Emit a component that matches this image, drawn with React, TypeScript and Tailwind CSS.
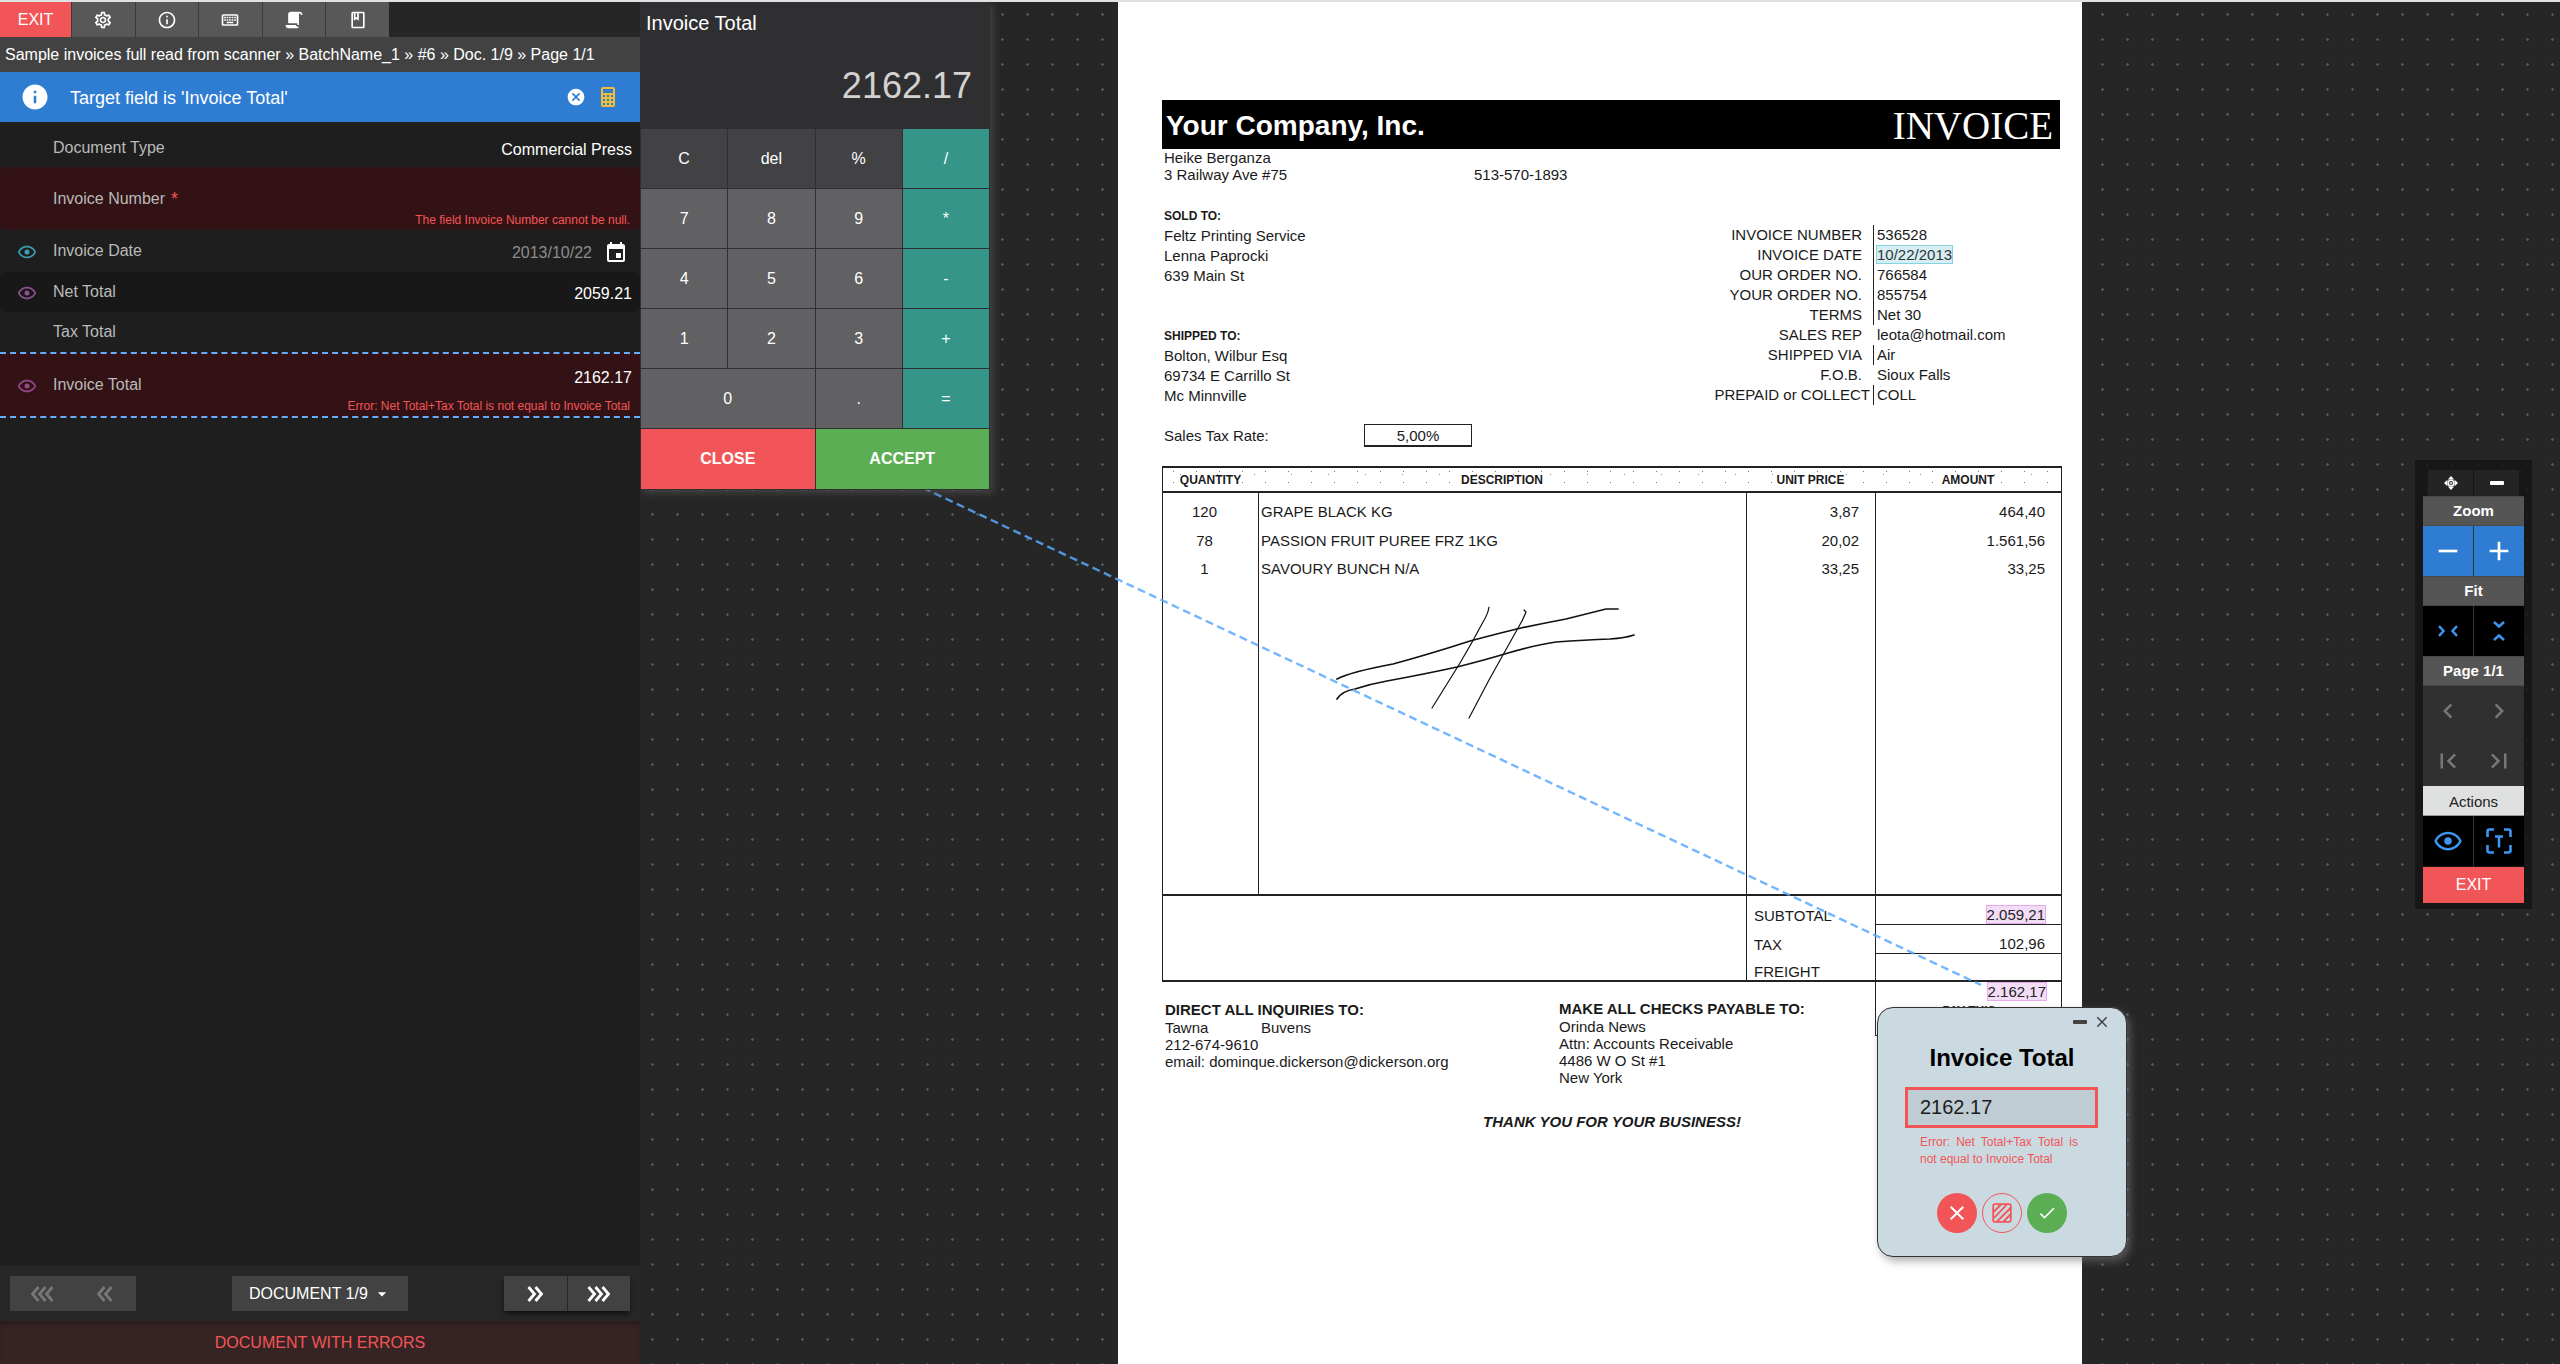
import React from 'react';
import {
  MdOutlineSettings,
  MdInfoOutline,
  MdOutlineKeyboard,
  MdOutlineBook,
  MdInfo,
  MdCancel,
  MdEvent,
  MdAdd,
  MdRemove,
  MdChevronLeft,
  MdChevronRight,
  MdFirstPage,
  MdLastPage,
  MdClose,
  MdCheck,
  MdArrowDropDown,
} from 'react-icons/md';

/* ---------- icons ---------- */

const ScriptIcon = () => (
  <svg viewBox="0 0 24 24" className="size-5" fill="currentColor" aria-hidden="true">
    <path d="M17.8,20C17.4,21.2 16.3,22 15,22H5C3.3,22 2,20.7 2,19V18H5L14.2,18C14.6,19.2 15.7,20 17,20H17.8M19,2C20.7,2 22,3.3 22,5V6H20V5C20,4.4 19.6,4 19,4C18.4,4 18,4.4 18,5V18H17C16.4,18 16,17.6 16,17V16H5V5C5,3.3 6.3,2 8,2H19Z" />
  </svg>
);

const EyeIcon = ({ className }: { className: string }) => (
  <svg viewBox="0 0 24 24" className={className} fill="currentColor" aria-hidden="true">
    <path d="M12,9A3,3 0 0,1 15,12A3,3 0 0,1 12,15A3,3 0 0,1 9,12A3,3 0 0,1 12,9M12,4.5C17,4.5 21.27,7.61 23,12C21.27,16.39 17,19.5 12,19.5C7,19.5 2.73,16.39 1,12C2.73,7.61 7,4.5 12,4.5M3.18,12C4.83,15.36 8.24,17.5 12,17.5C15.76,17.5 19.17,15.36 20.82,12C19.17,8.64 15.76,6.5 12,6.5C8.24,6.5 4.83,8.64 3.18,12Z" />
  </svg>
);

const CalculatorIcon = () => (
  <svg viewBox="0 0 24 24" className="size-6" fill="currentColor" aria-hidden="true">
    <path d="M7,2H17A2,2 0 0,1 19,4V20A2,2 0 0,1 17,22H7A2,2 0 0,1 5,20V4A2,2 0 0,1 7,2M7,4V8H17V4H7M7,10V12H9V10H7M11,10V12H13V10H11M15,10V12H17V10H15M7,14V16H9V14H7M11,14V16H13V14H11M15,14V16H17V14H15M7,18V20H9V18H7M11,18V20H13V18H11M15,18V20H17V18H15Z" />
  </svg>
);

const Chevrons = ({ count, left }: { count: number; left?: boolean }) => {
  const width = 10 + (count - 1) * 7;
  return (
    <svg
      viewBox={`0 0 ${width} 16`}
      width={width}
      height={16}
      fill="none"
      stroke="currentColor"
      strokeWidth="2.8"
      className={left ? 'rotate-180' : ''}
      aria-hidden="true"
    >
      {Array.from({ length: count }, (_, i) => (
        <path key={i} d={`M${1.5 + i * 7} 1 L${7.5 + i * 7} 8 L${1.5 + i * 7} 15`} />
      ))}
    </svg>
  );
};

const MoveIcon = () => (
  <svg viewBox="0 0 14 14" className="size-3.5" aria-hidden="true">
    <path d="M7 0 L10.2 3.4 H3.8 Z M7 14 L10.2 10.6 H3.8 Z M0 7 L3.4 3.8 V10.2 Z M14 7 L10.6 3.8 V10.2 Z" fill="#fff" />
    <circle cx="7" cy="7" r="2.8" fill="none" stroke="#fff" strokeWidth="1.6" />
    <circle cx="7" cy="7" r="1" fill="#fff" />
  </svg>
);

const DashIcon = () => (
  <svg viewBox="0 0 14 4" width="14" height="4" fill="currentColor" aria-hidden="true">
    <rect width="14" height="4" rx="1" />
  </svg>
);

const FitWidthIcon = () => (
  <svg viewBox="0 0 20 20" className="size-5" fill="none" stroke="currentColor" strokeWidth="2.5" aria-hidden="true">
    <path d="M1 5 L5.5 10 L1 15 M19 5 L14.5 10 L19 15" />
  </svg>
);

const FitHeightIcon = () => (
  <svg viewBox="0 0 20 20" className="size-5" fill="none" stroke="currentColor" strokeWidth="2.5" aria-hidden="true">
    <path d="M5 1 L10 5.5 L15 1 M5 19 L10 14.5 L15 19" />
  </svg>
);

const ScanTextIcon = () => (
  <svg viewBox="0 0 26 26" width="26" height="26" fill="none" stroke="currentColor" strokeWidth="2.6" aria-hidden="true">
    <path d="M1.5 9 V3.5 Q1.5 1.5 3.5 1.5 H8 M18 1.5 H22.5 Q24.5 1.5 24.5 3.5 V9 M24.5 17 V22.5 Q24.5 24.5 22.5 24.5 H18 M8 24.5 H3.5 Q1.5 24.5 1.5 22.5 V17" />
    <path d="M9 8.5 H17 M13 8.5 V19.5" />
  </svg>
);

const HatchIcon = () => (
  <svg viewBox="0 0 20 20" className="size-5" fill="none" stroke="currentColor" strokeWidth="1.8" aria-hidden="true">
    <rect x="1.2" y="1.2" width="17.6" height="17.6" rx="1.5" />
    <path d="M1.5 9 L9 1.5 M2 15 L14.5 1.8 M5 18.5 L18.5 5 M11.5 18.5 L18.5 11.5" />
  </svg>
);

/* ---------- left panel ---------- */

const toolbar = [
  { label: 'Settings', icon: <MdOutlineSettings className="size-5" /> },
  { label: 'Information', icon: <MdInfoOutline className="size-5" /> },
  { label: 'Keyboard', icon: <MdOutlineKeyboard className="size-5" /> },
  { label: 'Script', icon: <ScriptIcon /> },
  { label: 'Book', icon: <MdOutlineBook className="size-5" /> },
];

type Field = {
  id: string;
  label: string;
  value?: string;
  error?: string;
  required?: boolean;
  date?: boolean;
  eye?: string;
  row: string;
};

const fields: Field[] = [
  { id: 'doc-type', label: 'Document Type', value: 'Commercial Press', row: 'h-[45px] pt-1.5' },
  {
    id: 'inv-number',
    label: 'Invoice Number',
    required: true,
    error: 'The field Invoice Number cannot be null.',
    row: 'h-[63px] rounded-md bg-[#321214]',
  },
  { id: 'inv-date', label: 'Invoice Date', value: '2013/10/22', date: true, eye: 'text-[#3b9db3]', row: 'h-[42px]' },
  { id: 'net-total', label: 'Net Total', value: '2059.21', eye: 'text-[#8e4f90]', row: 'h-10 rounded-md bg-[#181818]' },
  { id: 'tax-total', label: 'Tax Total', value: '', row: 'h-10' },
  {
    id: 'inv-total',
    label: 'Invoice Total',
    value: '2162.17',
    eye: 'text-[#98478a]',
    error: 'Error: Net Total+Tax Total is not equal to Invoice Total',
    row: 'h-[66px] border-y-2 border-dashed border-[#63adff] bg-[#321214]',
  },
];

function FieldRow({ f }: { f: Field }) {
  return (
    <div className={`flex items-stretch pr-2 ${f.row}`}>
      <div className="flex w-[53px] shrink-0 items-center justify-center pt-0.5">
        {f.eye && <EyeIcon className={`size-5 ${f.eye}`} />}
      </div>
      <label htmlFor={f.id} className="flex shrink-0 items-center gap-1.5 whitespace-pre text-[#bababa]">
        {f.label}
        {f.required && <span className="text-lg text-[#f25558]">*</span>}
      </label>
      <div className={`flex min-w-0 flex-1 flex-col items-end ${f.error ? 'justify-end gap-2 pb-0.5' : 'justify-center pt-1'}`}>
        <div className="flex w-full items-center justify-end gap-3">
          <input
            id={f.id}
            defaultValue={f.value}
            className={`h-6 w-full min-w-0 bg-transparent text-right outline-none ${f.date ? 'text-[#8c8c8c]' : 'text-white'}`}
          />
          {f.date && (
            <button type="button" aria-label="Pick a date" className="mr-1 text-white">
              <MdEvent className="size-6" />
            </button>
          )}
        </div>
        {f.error && <p className="pr-0.5 text-xs leading-4 text-[#f25558]">{f.error}</p>}
      </div>
    </div>
  );
}

function Sidebar() {
  return (
    <aside className="flex w-[640px] shrink-0 flex-col bg-[#1e1e1e]">
      <div className="bg-[#262626]">
        <div className="flex h-[35px] w-[389px] gap-px bg-[#3a3a3a]">
          <button className="w-[71px] bg-[#f25558] text-white">EXIT</button>
          {toolbar.map((t) => (
            <button key={t.label} aria-label={t.label} className="flex flex-1 items-center justify-center bg-[#585858] text-white">
              {t.icon}
            </button>
          ))}
        </div>
      </div>
      <nav className="h-[35px] bg-[#424242] px-[5px] leading-[35px] whitespace-nowrap text-white">
        Sample invoices full read from scanner » BatchName_1 » #6 » Doc. 1/9 » Page 1/1
      </nav>
      <div className="flex h-[50px] items-center bg-[#2f7dd3] pr-5 pl-5 text-lg text-white">
        <MdInfo className="mr-5 size-[30px]" />
        <span className="flex-1 pt-0.5">Target field is &apos;Invoice Total&apos;</span>
        <button aria-label="Clear target">
          <MdCancel className="size-5" />
        </button>
        <button aria-label="Calculator" className="ml-2.5 text-[#f0bd3a]">
          <CalculatorIcon />
        </button>
      </div>
      <form className="flex-1">
        {fields.map((f) => (
          <FieldRow key={f.id} f={f} />
        ))}
      </form>
      <div className="flex items-center justify-between bg-[#272727] p-2.5">
        <div className="flex h-[35px] w-[126px] bg-[#424242] text-[#777]">
          <button disabled aria-label="First document" className="flex flex-1 items-center justify-center">
            <Chevrons count={3} left />
          </button>
          <button disabled aria-label="Previous document" className="flex flex-1 items-center justify-center">
            <Chevrons count={2} left />
          </button>
        </div>
        <div className="relative h-[35px] w-[176px] bg-[#424242] text-white">
          <select aria-label="Document" className="size-full appearance-none bg-transparent pl-[17px] outline-none">
            <option>DOCUMENT 1/9</option>
          </select>
          <MdArrowDropDown className="pointer-events-none absolute top-2 right-4 size-5" />
        </div>
        <div className="flex h-[35px] w-[126px] gap-px text-white shadow-md shadow-black/50">
          <button aria-label="Next document" className="flex flex-1 items-center justify-center bg-[#424242]">
            <Chevrons count={2} />
          </button>
          <button aria-label="Last document" className="flex flex-1 items-center justify-center bg-[#424242]">
            <Chevrons count={3} />
          </button>
        </div>
      </div>
      <div className="bg-[#362424] pt-2.5 pb-[9px] text-center text-[#f25558] shadow-[inset_0_4px_4px_rgba(0,0,0,0.2)]">DOCUMENT WITH ERRORS</div>
    </aside>
  );
}

/* ---------- calculator ---------- */

const GREY = 'bg-[#616163]';
const DARK = 'bg-[#424244]';
const TEAL = 'bg-[#359588]';
const keys: [string, string][] = [
  ['C', DARK], ['del', DARK], ['%', DARK], ['/', TEAL],
  ['7', GREY], ['8', GREY], ['9', GREY], ['*', TEAL],
  ['4', GREY], ['5', GREY], ['6', GREY], ['-', TEAL],
  ['1', GREY], ['2', GREY], ['3', GREY], ['+', TEAL],
  ['0', `${GREY} col-span-2`], ['.', GREY], ['=', TEAL],
];

function Calculator() {
  return (
    <section
      aria-label="Calculator"
      className="absolute top-0 left-0 z-20 w-[350px] bg-[#2f2f31] p-px pt-0 text-white shadow-[3px_3px_8px_rgba(90,90,90,0.6)]"
    >
      <h2 className="px-[5px] pt-[7px] text-xl">Invoice Total</h2>
      <output className="block pt-[29px] pr-[17px] pb-[23px] text-right text-4xl text-[#d4d2d0]">2162.17</output>
      <div className="grid grid-cols-4 gap-px">
        {keys.map(([k, cls]) => (
          <button key={k} className={`h-[59px] ${cls}`}>
            {k}
          </button>
        ))}
        <button className="col-span-2 h-[60px] bg-[#f25558] font-bold">CLOSE</button>
        <button className="col-span-2 h-[60px] bg-[#5cae54] font-bold">ACCEPT</button>
      </div>
    </section>
  );
}

/* ---------- invoice page ---------- */

const details: [string, string, boolean][] = [
  ['INVOICE NUMBER', '536528', true],
  ['INVOICE DATE', '10/22/2013', true],
  ['OUR ORDER NO.', '766584', true],
  ['YOUR ORDER NO.', '855754', true],
  ['TERMS', 'Net 30', true],
  ['SALES REP', 'leota@hotmail.com', false],
  ['SHIPPED VIA', 'Air', true],
  ['F.O.B.', 'Sioux Falls', false],
  ['PREPAID or COLLECT', 'COLL', true],
];

const items = [
  ['120', 'GRAPE BLACK KG', '3,87', '464,40'],
  ['78', 'PASSION FRUIT PUREE FRZ 1KG', '20,02', '1.561,56'],
  ['1', 'SAVOURY BUNCH N/A', '33,25', '33,25'],
];

const Mark = ({ children }: { children: React.ReactNode }) => (
  <mark className="bg-[#f3dcf6] text-[#222] outline outline-[#e5a9ec]">{children}</mark>
);

const Signature = () => (
  <svg viewBox="1330 600 310 125" width="310" height="125" fill="none" stroke="#111" strokeLinecap="round" aria-hidden="true">
    <path strokeWidth="1.7" d="M1337 679 Q1350 672 1393 664 Q1430 654 1470 641 Q1500 633 1521 628 Q1545 623 1566 619 L1606 609 L1618 609" />
    <path strokeWidth="1.7" d="M1337 699 Q1342 691 1355 689 Q1370 684 1387 681 Q1425 674 1457 667 Q1485 660 1508 653 Q1535 645 1556 642 Q1585 640 1610 639 Q1625 638 1634 635" />
    <path strokeWidth="1.2" d="M1489 607 Q1488 614 1483 622 Q1472 643 1460 663 L1432 708" />
    <path strokeWidth="1.2" d="M1524 610 L1526 612 Q1523 620 1518 628 L1489 680 L1469 718" />
  </svg>
);

function InvoiceSheet() {
  return (
    <article className="relative h-full w-[964px] bg-white pt-[98px] pr-5 pl-11 text-[15px] leading-5 text-[#1a1a1a]">
      <header className="mr-0.5 flex h-[49px] items-center justify-between bg-black pt-0.5 pr-[7px] pl-1 text-white">
        <h1 className="text-[28px] font-bold">Your Company, Inc.</h1>
        <span className="font-['Liberation_Serif',serif] text-[39px]">INVOICE</span>
      </header>
      <div className="grid grid-cols-[312px_1fr] items-end leading-[17px]">
        <p className="pl-0.5">
          Heike Berganza
          <br />3 Railway Ave #75
        </p>
        <p>513-570-1893</p>
      </div>

      <div className="mt-[23px] flex justify-between pr-0.5 pl-0.5">
        <div>
          <h3 className="text-xs leading-5 font-bold">SOLD TO:</h3>
          <p>
            Feltz Printing Service
            <br />
            Lenna Paprocki
            <br />
            639 Main St
          </p>
          <h3 className="mt-10 text-xs leading-5 font-bold">SHIPPED TO:</h3>
          <p>
            Bolton, Wilbur Esq
            <br />
            69734 E Carrillo St
            <br />
            Mc Minnville
          </p>
        </div>
        <dl className="w-[396px] pt-[19px]">
          {details.map(([k, v, line]) => (
            <div key={k} className="flex">
              <dt className={`w-[209px] shrink-0 text-right ${k.startsWith('PREPAID') ? 'pr-[3px]' : 'pr-[11px]'}`}>{k}</dt>
              <dd className={`border-l pl-[3px] ${line ? 'border-[#222]' : 'border-transparent'}`}>
                {k === 'INVOICE DATE' ? (
                  <mark className="bg-[#d5eef4] text-[#333] outline outline-[#86d3e0]">{v}</mark>
                ) : (
                  v
                )}
              </dd>
            </div>
          ))}
        </dl>
      </div>

      <div className="mt-[18px] flex items-center pl-0.5">
        <span className="w-[200px]">Sales Tax Rate:</span>
        <span className="h-[23px] w-[108px] border border-b-2 border-[#222] text-center leading-[21px]">5,00%</span>
      </div>

      <table className="mt-[19px] w-full table-fixed border-separate border-spacing-0">
        <colgroup>
          <col className="w-[96px]" />
          <col />
          <col className="w-[129px]" />
          <col className="w-[187px]" />
        </colgroup>
        <thead>
          <tr className="bg-[radial-gradient(circle,#777_0.5px,transparent_1px),radial-gradient(circle,#888_0.5px,transparent_1px)] bg-size-[23px_11px,37px_17px] text-xs">
            <th className="h-[27px] border-t-2 border-b-2 border-l border-[#222] p-0 font-bold">QUANTITY</th>
            <th className="border-t-2 border-b-2 border-[#222] p-0 font-bold">DESCRIPTION</th>
            <th className="border-t-2 border-b-2 border-[#222] p-0 font-bold">UNIT PRICE</th>
            <th className="border-t-2 border-r border-b-2 border-[#222] p-0 font-bold">AMOUNT</th>
          </tr>
        </thead>
        <tbody>
          {items.map(([q, d, u, a], i) => {
            const h = i === 0 ? 'h-[33px] pt-[5px]' : 'h-7 pt-px';
            return (
              <tr key={d}>
                <td className={`border-l border-[#222] p-0 pr-3 text-center ${h}`}>{q}</td>
                <td className={`border-l border-[#222] p-0 pl-0.5 ${h}`}>{d}</td>
                <td className={`border-l border-[#222] p-0 pr-4 text-right ${h}`}>{u}</td>
                <td className={`border-x border-[#222] p-0 pr-4 text-right ${h}`}>{a}</td>
              </tr>
            );
          })}
          <tr>
            <td className="h-[314px] border-b-2 border-l border-[#222]" />
            <td className="border-b-2 border-l border-[#222] p-0 pt-[18px] pl-[71px] align-top">
              <Signature />
            </td>
            <td className="border-b-2 border-l border-[#222]" />
            <td className="border-x border-b-2 border-[#222]" />
          </tr>
        </tbody>
        <tfoot className="leading-[17px]">
          <tr>
            <td rowSpan={3} colSpan={2} className="border-b-2 border-l border-[#222]" />
            <td className="h-[29px] border-l border-[#222] p-0 pt-[9px] pl-[7px]">SUBTOTAL</td>
            <td className="border-x border-b border-[#222] p-0 pt-[9px] pr-4 text-right">
              <Mark>2.059,21</Mark>
            </td>
          </tr>
          <tr>
            <td className="h-[29px] border-l border-[#222] p-0 pt-[9px] pl-[7px]">TAX</td>
            <td className="border-x border-b border-[#222] p-0 pt-[9px] pr-4 text-right">102,96</td>
          </tr>
          <tr>
            <td className="h-7 border-b-2 border-l border-[#222] p-0 pt-[9px] pl-[7px]">FREIGHT</td>
            <td className="border-x border-b-2 border-[#222]" />
          </tr>
        </tfoot>
      </table>

      <footer className="flex leading-[17px]">
        <div className="w-[394px] pt-[19px] pl-[3px]">
          <h3 className="leading-[18px] font-bold">DIRECT ALL INQUIRIES TO:</h3>
          <p className="flex">
            <span className="w-24">Tawna</span>
            <span>Buvens</span>
          </p>
          <p>212-674-9610</p>
          <p>email: dominque.dickerson@dickerson.org</p>
        </div>
        <div className="flex-1 pt-[18px] pl-[3px]">
          <h3 className="leading-[18px] font-bold">MAKE ALL CHECKS PAYABLE TO:</h3>
          <p>Orinda News</p>
          <p>Attn: Accounts Receivable</p>
          <p>4486 W O St #1</p>
          <p>New York</p>
        </div>
        <div className="h-[54px] w-[187px] border border-t-0 border-[#222] pt-px pr-[15px]">
          <p className="text-right">
            <Mark>2.162,17</Mark>
          </p>
          <p className="pt-[3px] pl-4 text-center text-xs font-bold">PAY THIS</p>
        </div>
      </footer>
      <p className="mt-[26px] text-center font-bold italic">THANK YOU FOR YOUR BUSINESS!</p>

      <FieldPopup />
    </article>
  );
}

/* ---------- field editor floating over the page ---------- */

function FieldPopup() {
  return (
    <section
      aria-label="Edit Invoice Total"
      className="absolute top-[1005px] left-[759px] z-20 h-[250px] w-[250px] rounded-2xl border border-[#333] bg-[#cbdae1] text-black shadow-[3px_4px_8px_rgba(120,120,120,0.6)]"
    >
      <div className="flex h-7 items-center justify-end gap-1.5 pr-[15px] text-[#444]">
        <button aria-label="Minimise">
          <DashIcon />
        </button>
        <button aria-label="Close">
          <MdClose className="size-[18px]" />
        </button>
      </div>
      <label htmlFor="popup-total" className="mt-1.5 block text-center text-2xl font-bold">
        Invoice Total
      </label>
      <input
        id="popup-total"
        defaultValue="2162.17"
        className="mt-[13px] ml-[27px] block h-[41px] w-[193px] border-3 border-[#f25558] bg-[#bfccd4] px-3 text-xl text-[#1c1c1c] outline-none"
      />
      <p className="mt-1.5 ml-[42px] w-[158px] text-justify text-xs leading-[17px] text-[#f25558]">
        Error: Net Total+Tax Total is not equal to Invoice Total
      </p>
      <div className="mt-[25px] flex justify-center gap-[5px] text-white">
        <button aria-label="Reject" className="flex size-10 items-center justify-center rounded-full bg-[#f25558]">
          <MdClose className="size-6" />
        </button>
        <button
          aria-label="Select area"
          className="flex size-10 items-center justify-center rounded-full border border-[#f25558] text-[#f25558]"
        >
          <HatchIcon />
        </button>
        <button aria-label="Accept" className="flex size-10 items-center justify-center rounded-full bg-[#5cae54]">
          <MdCheck className="size-5" />
        </button>
      </div>
    </section>
  );
}

/* ---------- floating viewer tools ---------- */

const ToolHead = ({ children }: { children: React.ReactNode }) => (
  <h4 className="h-[30px] border-y border-[#484848] bg-[#555] text-center leading-7 font-bold text-white">{children}</h4>
);

const toolBtn = 'flex h-[50px] flex-1 items-center justify-center';

function ViewerTools() {
  return (
    <section aria-label="Viewer tools" className="absolute top-[458px] right-7 z-10 w-[117px] bg-[#151515]/85 px-2 pt-2.5 pb-1.5 text-[15px]">
      <div className="flex h-[26px] gap-px px-[5px] text-white">
        <button aria-label="Move" className="flex flex-1 items-center justify-center bg-[#242424]">
          <MoveIcon />
        </button>
        <button aria-label="Minimise tools" className="flex flex-1 items-center justify-center bg-[#242424]">
          <DashIcon />
        </button>
      </div>
      <ToolHead>Zoom</ToolHead>
      <div className="flex gap-px bg-[#333] text-white">
        <button aria-label="Zoom out" className={`${toolBtn} bg-[#2f7dd3]`}>
          <MdRemove className="size-8" />
        </button>
        <button aria-label="Zoom in" className={`${toolBtn} bg-[#2f7dd3]`}>
          <MdAdd className="size-8" />
        </button>
      </div>
      <ToolHead>Fit</ToolHead>
      <div className="flex gap-px bg-[#333] text-[#3d95f2]">
        <button aria-label="Fit width" className={`${toolBtn} bg-black`}>
          <FitWidthIcon />
        </button>
        <button aria-label="Fit height" className={`${toolBtn} bg-black`}>
          <FitHeightIcon />
        </button>
      </div>
      <ToolHead>Page 1/1</ToolHead>
      <div className="grid grid-cols-2 bg-[#333]/90 text-[#777]">
        <button disabled aria-label="Previous page" className={toolBtn}>
          <MdChevronLeft className="size-[30px]" />
        </button>
        <button disabled aria-label="Next page" className={toolBtn}>
          <MdChevronRight className="size-[30px]" />
        </button>
        <button disabled aria-label="First page" className={toolBtn}>
          <MdFirstPage className="size-[30px]" />
        </button>
        <button disabled aria-label="Last page" className={toolBtn}>
          <MdLastPage className="size-[30px]" />
        </button>
      </div>
      <h4 className="h-[30px] border-b border-[#999] bg-[#dfe1e0] text-center leading-8 text-[#222]">Actions</h4>
      <div className="flex gap-px bg-[#333] text-[#3d95f2]">
        <button aria-label="Toggle highlights" className={`${toolBtn} bg-black`}>
          <EyeIcon className="size-[30px]" />
        </button>
        <button aria-label="Select text" className={`${toolBtn} bg-black`}>
          <ScanTextIcon />
        </button>
      </div>
      <button className="mt-px h-9 w-full bg-[#f25558] text-base text-white">EXIT</button>
    </section>
  );
}

export default function App() {
  return (
    <div className="flex h-screen overflow-hidden border-t-2 border-[#dfe1e3] bg-[#262626] font-['Liberation_Sans',Arial,sans-serif] text-base">
      <Sidebar />
      <main className="relative flex flex-1 justify-center overflow-hidden bg-[#262626] bg-[radial-gradient(circle,#4d5c65_1px,transparent_1.5px)] bg-size-[25px_25px]">
        <InvoiceSheet />
        <svg className="pointer-events-none absolute inset-0 z-10 size-full" aria-hidden="true">
          <line x1="0" y1="353" x2="1341" y2="983" stroke="#5aa9ff" strokeOpacity="0.85" strokeWidth="2.4" strokeDasharray="8 4.5" />
        </svg>
        <Calculator />
        <ViewerTools />
      </main>
    </div>
  );
}
